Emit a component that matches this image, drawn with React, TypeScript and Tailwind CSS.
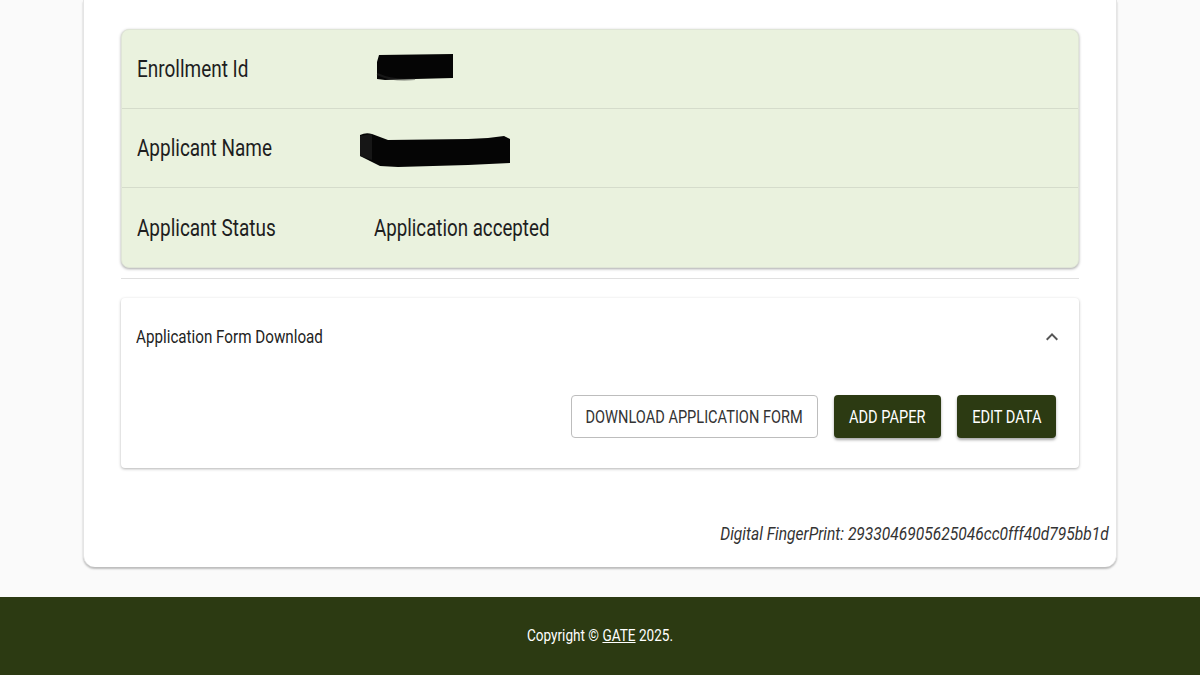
import React from "react";

const font = { fontFamily: 'Roboto, "Liberation Sans", sans-serif' };

export default function App() {
  return (
    <div className="min-h-[675px] w-full bg-[#fafafa] flex flex-col" style={font}>
      <div className="px-[83px] pt-0 pb-[30px] flex-1">
        <div className="bg-white rounded-b-xl shadow-[0_2px_2px_rgba(0,0,0,0.25)] border-x border-[#e5e5e5] pt-[29px] pb-[18px]">
          <div className="mx-[37px]">
            <div className="bg-[#eaf2de] rounded-lg shadow-[0_1px_3px_rgba(0,0,0,0.35)] border border-[#dfe5d6]">
              <div className="flex items-center h-[79px] border-b border-[#d5dccb]">
                <div className="w-[252px] pl-[15px] text-[24px] text-[#1e1e1e]">
                  <span className="inline-block scale-x-[0.79] origin-left whitespace-nowrap">Enrollment Id</span>
                </div>
                <svg width="80" height="30" viewBox="0 0 80 30" className="ml-[1px] -mt-[4px]">
                  <path d="M4 3 L78 2 L78 26 L40 27 L10 28 L2 27 L2 10 Z" fill="#050505" />
                  <path d="M2 22 Q20 30 40 27" stroke="#333" strokeWidth="2" fill="none" opacity="0.4" />
                </svg>
              </div>
              <div className="flex items-center h-[79px] border-b border-[#d5dccb]">
                <div className="w-[236px] pl-[15px] text-[24px] text-[#1e1e1e]">
                  <span className="inline-block scale-x-[0.79] origin-left whitespace-nowrap">Applicant Name</span>
                </div>
                <svg width="154" height="38" viewBox="0 0 154 38" className="mt-[1px]">
                  <path d="M2 5 Q8 2 14 4 L30 10 L110 9 L130 8 L146 6 L152 9 L152 33 L110 35 L40 37 L22 36 L10 30 L2 26 Z" fill="#050505" />
                  <path d="M2 6 L14 4 L14 30 L2 26 Z" fill="#222" opacity="0.6" />
                </svg>
              </div>
              <div className="flex items-center h-[79px]">
                <div className="w-[252px] pl-[15px] text-[24px] text-[#1e1e1e]">
                  <span className="inline-block scale-x-[0.79] origin-left whitespace-nowrap">Applicant Status</span>
                </div>
                <div className="text-[24px] text-[#1e1e1e]">
                  <span className="inline-block scale-x-[0.78] origin-left whitespace-nowrap">Application accepted</span>
                </div>
              </div>
            </div>
            <div className="mt-[10px] border-t border-[#e0e0e0]" />
            <div className="mt-[19px] bg-white rounded shadow-[0_1px_3px_rgba(0,0,0,0.3)]">
              <div className="flex items-center justify-between h-[78px] pl-[15px] pr-[15px]">
                <span className="text-[19px] text-[#222] inline-block scale-x-[0.80] origin-left whitespace-nowrap">Application Form Download</span>
                <svg width="24" height="24" viewBox="0 0 24 24" fill="#555">
                  <path d="M7.41 15.41 12 10.83l4.59 4.58L18 14l-6-6-6 6z" />
                </svg>
              </div>
              <div className="flex justify-end items-center gap-[16px] pr-[23px] pb-[30px] pt-[19px]">
                <button className="h-[43px] w-[247px] border border-[#bdbdbd] rounded text-[18px] text-[#333] bg-white flex items-center justify-center">
                  <span className="inline-block scale-x-[0.81] whitespace-nowrap">DOWNLOAD APPLICATION FORM</span>
                </button>
                <button className="h-[43px] w-[107px] rounded text-[18px] text-white bg-[#2c3a12] shadow-[0_2px_3px_rgba(0,0,0,0.35)] flex items-center justify-center">
                  <span className="inline-block scale-x-[0.81] whitespace-nowrap">ADD PAPER</span>
                </button>
                <button className="h-[43px] w-[99px] rounded text-[18px] text-white bg-[#2c3a12] shadow-[0_2px_3px_rgba(0,0,0,0.35)] flex items-center justify-center">
                  <span className="inline-block scale-x-[0.81] whitespace-nowrap">EDIT DATA</span>
                </button>
              </div>
            </div>
          </div>
          <div className="mt-[52px] text-right pr-[7px] italic text-[19px] text-[#333]">
            <span className="inline-block scale-x-[0.82] origin-right whitespace-nowrap">Digital FingerPrint: 2933046905625046cc0fff40d795bb1d</span>
          </div>
        </div>
      </div>
      <footer className="h-[78px] bg-[#2c3a12] flex items-center justify-center text-white text-[16px]">
        <span className="inline-block scale-x-[0.85] whitespace-nowrap">Copyright © <span className="underline">GATE</span> 2025.</span>
      </footer>
    </div>
  );
}
